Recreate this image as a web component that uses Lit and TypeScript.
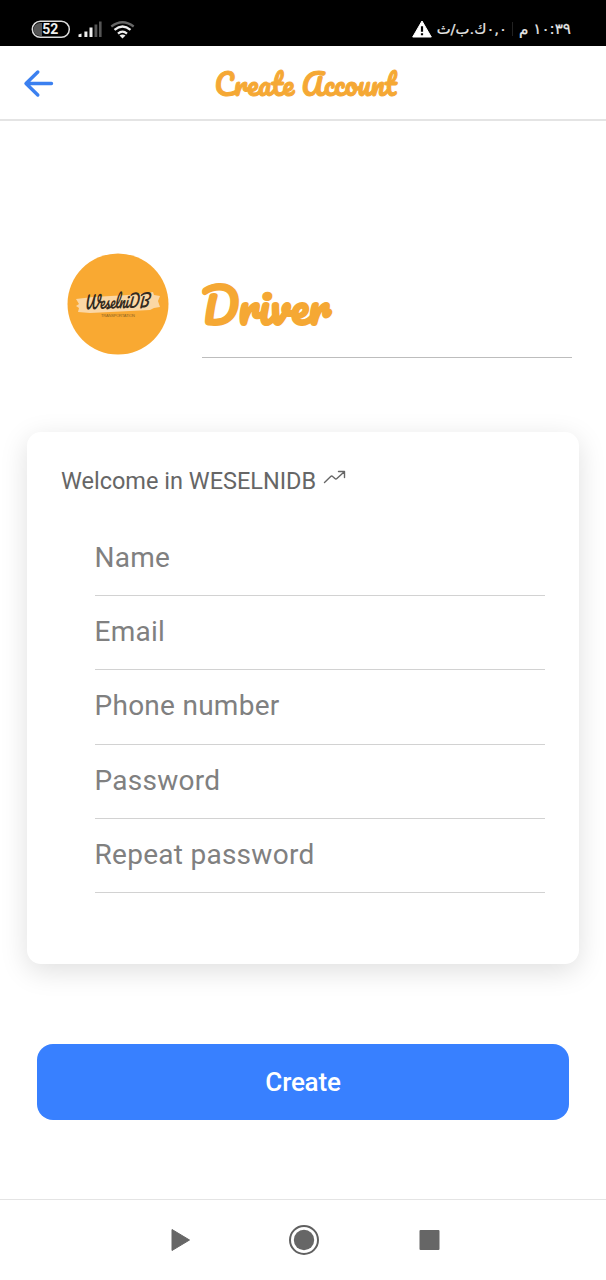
import { LitElement, html, css } from "lit";
import { customElement } from "lit/decorators.js";

@customElement("status-bar")
class StatusBar extends LitElement {
  static styles = css`
    :host { display: flex; justify-content: space-between; height: 46px; box-sizing: border-box; padding: 18px 35px 0 31px; background: #000; color: #e8e8e8; }
    .left { display: block; }
    .right { display: flex; direction: rtl; height: 21px; align-items: center; font-family: "DejaVu Sans", sans-serif; -webkit-text-stroke: .2px #e8e8e8; }
    .rate { font-size: 14.8px; }
    .time { font-size: 15.2px; }
    .sep { width: 1px; height: 14px; background: #222; margin: 0 6px 0 5px; }
    .warn { margin-right: 5px; }
  `;
  render() {
    return html`
      <svg class="left" width="105" height="24" viewBox="0 0 105 24">
        <path d="M11 5H9a6 6 0 0 0 0 13h2z" fill="#555" />
        <rect x="1.3" y="3.3" width="37" height="16" rx="8" fill="none" stroke="#ddd" stroke-width="1.5" />
        <text x="11.2" y="16" font-family="Roboto, sans-serif" font-weight="700" font-size="14" textLength="16" fill="#eee">52</text>
        <path d="M47.5 19v-2.5l3-1V19zM53.4 19v-5.5h3V19zM58.5 19V9.5h3V19z" fill="#eee" />
        <path d="M63.5 19V6.5h2.8V19zM68 19V3.5h2.6V19z" fill="#555" />
        <g fill="none" stroke-width="2.3">
          <path d="M80.3 8.5q11.2-8.5 22.4 0" stroke="#666" />
          <path d="M83.5 11.8q8-6.6 16 0M87 15.6q4.5-4 9 0" stroke="#eee" />
        </g>
        <path d="M91.5 20.5l-3-3q3-2.2 6 0z" fill="#eee" />
      </svg>
      <div class="right">
        <span class="time">١٠:٣٩ م</span>
        <span class="sep"></span>
        <span class="rate">٠,٠ك.ب/ث</span>
        <svg class="warn" width="20" height="18" viewBox="0 0 20 18">
          <path d="M10 1l9.3 16H.7z" fill="#fff" stroke="#fff" stroke-linejoin="round" />
          <path d="M10 6.3v5.5M10 13.3v2" stroke="#000" stroke-width="2.2" />
        </svg>
      </div>
    `;
  }
}

@customElement("brand-logo")
class BrandLogo extends LitElement {
  static styles = css`
    :host { display: block; width: 102px; height: 102px; }
    svg { display: block; overflow: visible; }
    .name { font: italic 400 18px Pacifico, "Segoe Script", "Liberation Serif", cursive; }
    .tag { font: 4px "Liberation Sans", sans-serif; }
  `;
  render() {
    return html`
      <svg width="102" height="102" viewBox="0 0 102 102">
        <circle cx="51" cy="51" r="50.5" fill="#f9a932" />
        <path d="M9 46l17-2 35-2 20-2 5-1 1 3 6 1-2 5 2 6-6 1-4 2-20 1-20 1-20 1-12-1 1-4-3-2 3-2z" fill="#fbd7a5" />
        <text class="name" x="17" y="55.5" textLength="65" lengthAdjust="spacingAndGlyphs" fill="#332a20" transform="rotate(-2 50 51)">WeselniDB</text>
        <text class="tag" x="34" y="63.5" textLength="34" fill="#8c6424">TRANSPORTATION</text>
      </svg>
    `;
  }
}

@customElement("app-root")
class AppRoot extends LitElement {
  static styles = css`
    :host { display: flex; flex-direction: column; height: 1280px; background: #fff; font-family: Roboto, sans-serif; overflow: hidden; }
    svg { display: block; flex: none; overflow: visible; }
    .header { display: grid; grid-template-columns: 214px 1fr; height: 75px; box-sizing: border-box; border-bottom: 2px solid #e4e4e4; }
    .back { margin: 23px 0 0 23px; }
    .title { margin-top: 12px; }
    .script { font-family: Pacifico, "Segoe Script", cursive; font-weight: 400; fill: #f5a834; stroke: #f5a834; stroke-linejoin: round; }
    .hero { display: flex; padding: 132px 34px 0 67px; height: 105px; }
    .role { flex: 1; margin-left: 33px; border-bottom: 1px solid #bdbdbd; }
    .word { margin-top: 22px; }
    .card { margin: 74px 27px 0; height: 532px; box-sizing: border-box; padding: 34px; border-radius: 14px; background: #fff; box-shadow: 0 7px 28px rgba(0, 0, 0, .13); }
    .welcome { display: flex; height: 31px; line-height: 31px; font-size: 23.5px; color: #666; }
    .trend { margin: 4px 0 0 7px; }
    .fields { padding: 25px 0 0 34px; }
    .field { height: 74.2px; box-sizing: border-box; border-bottom: 1px solid #d2d2d2; line-height: 72px; font-size: 28px; letter-spacing: .27px; text-indent: -.5px; color: #808080; }
    .create { margin: 80px 37px 0; height: 76px; border-radius: 16px; background: #3880ff; color: #fff; font-size: 26px; letter-spacing: -.2px; font-weight: 500; line-height: 76px; text-align: center; }
    .nav { margin-top: auto; height: 81px; box-sizing: border-box; border-top: 1px solid #e4e4e4; display: flex; padding: 25px 0 0 171px; }
    .home { margin-left: 98px; }
    .recent { margin-left: 98px; }
  `;
  render() {
    return html`
      <status-bar></status-bar>
      <div class="header">
        <svg class="back" width="32" height="30" viewBox="0 0 32 30">
          <path d="M14.8 3L3 14.5 14.8 26M3.5 14.5H28.5" fill="none" stroke="#3b80f0" stroke-width="3.4" stroke-linecap="round" stroke-linejoin="round" />
        </svg>
        <svg class="title" width="190" height="50" viewBox="0 0 190 50">
          <text class="script" x="0.5" y="38" font-size="29.5" stroke-width="1" textLength="182" lengthAdjust="spacingAndGlyphs">Create Account</text>
        </svg>
      </div>
      <div class="hero">
        <brand-logo></brand-logo>
        <div class="role">
          <svg class="word" width="150" height="66" viewBox="0 0 150 66">
            <text class="script" x="-1" y="50" font-size="46" stroke-width="2" textLength="130" lengthAdjust="spacingAndGlyphs">Driver</text>
          </svg>
        </div>
      </div>
      <div class="card">
        <div class="welcome">
          <span>Welcome in WESELNIDB</span>
          <svg class="trend" width="24" height="16" viewBox="0 0 24 16">
            <path d="M1.5 12.5L7.7 6.5q1-1 2 0l2.2 2q1 1 2 0L21 2M15.5 1.5h6v6" fill="none" stroke="#666" stroke-width="1.4" stroke-linecap="round" stroke-linejoin="round" />
          </svg>
        </div>
        <div class="fields">
          ${["Name", "Email", "Phone number", "Password", "Repeat password"].map((f) => html`<div class="field">${f}</div>`)}
        </div>
      </div>
      <div class="create">Create</div>
      <div class="nav">
        <svg width="20" height="30" viewBox="0 0 20 30"><path d="M1 4.5L18.5 15 1 25.5z" fill="#666" stroke="#666" stroke-linejoin="round" /></svg>
        <svg class="home" width="30" height="30" viewBox="0 0 30 30">
          <circle cx="15" cy="15" r="14" fill="none" stroke="#606060" stroke-width="2" />
          <circle cx="15" cy="15" r="10.2" fill="#666" />
        </svg>
        <svg class="recent" width="24" height="30" viewBox="0 0 24 30"><rect x="2.5" y="5" width="20" height="20" rx="1" fill="#666" /></svg>
      </div>
    `;
  }
}
